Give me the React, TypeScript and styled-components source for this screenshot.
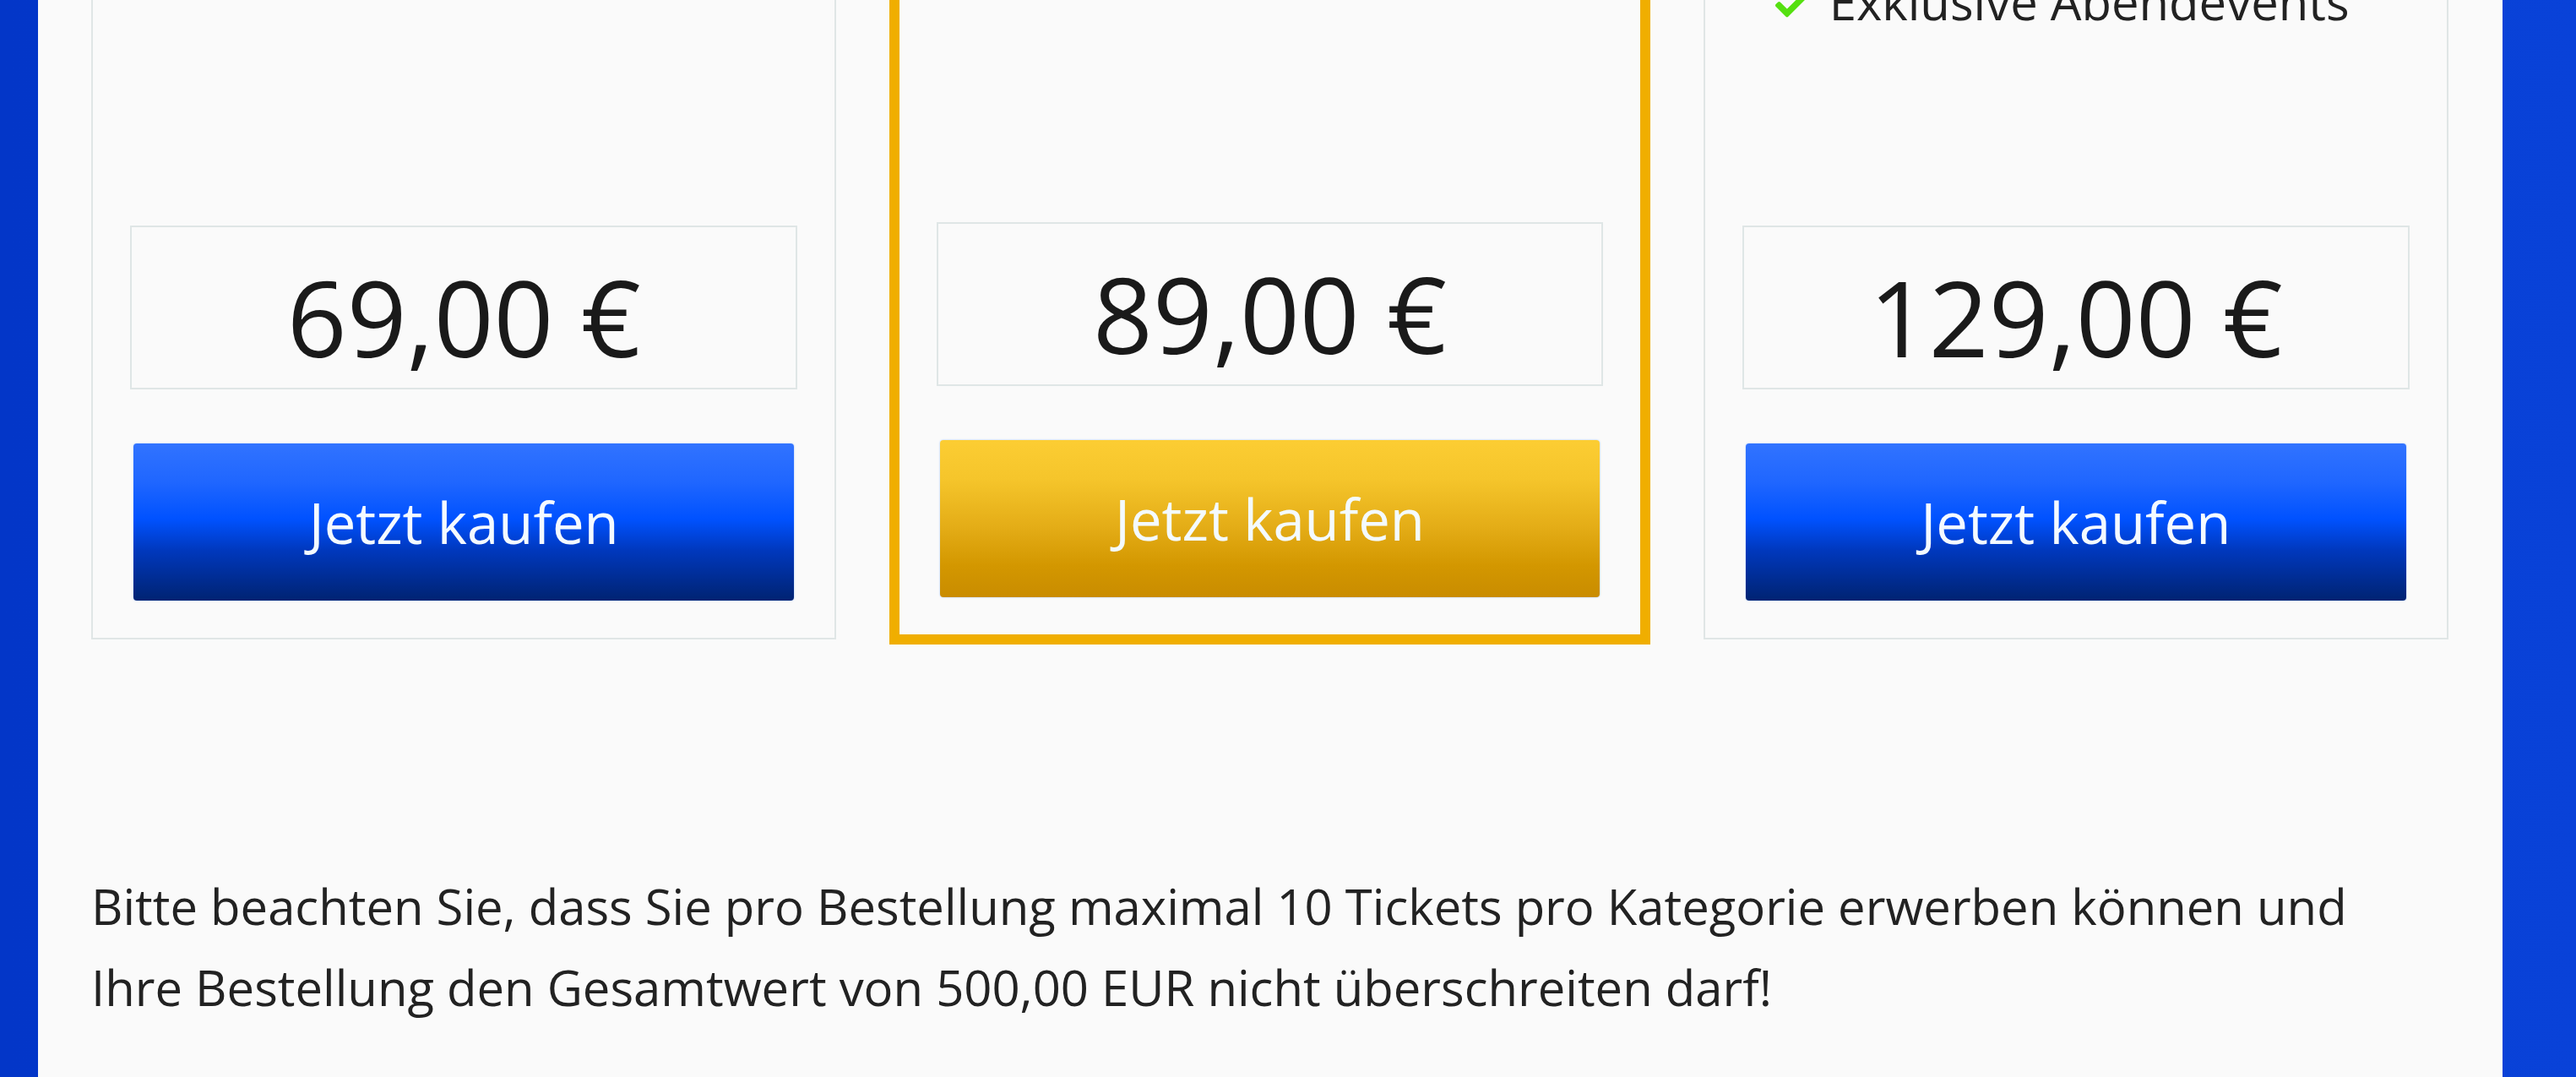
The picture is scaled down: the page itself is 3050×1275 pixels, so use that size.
import React from "react";
import styled, { createGlobalStyle, css } from "styled-components";
import { FaCheck } from "react-icons/fa";

interface Ticket {
  id: string;
  price: string;
  featured?: boolean;
  features?: string[];
}

const tickets: Ticket[] = [
  { id: "basic", price: "69,00 €" },
  { id: "plus", price: "89,00 €", featured: true },
  { id: "vip", price: "129,00 €", features: ["Exklusive Abendevents"] }
];

const GlobalStyle = createGlobalStyle`
  html, body {
    margin: 0;
    padding: 0;
  }
  body {
    background: #0437cc;
    font-family: "Open Sans", "Noto Sans", sans-serif;
    color: #222;
  }
`;

const App: React.FC = () => {
  return (
    <>
      <GlobalStyle />
      <Shell>
        <Main>
          <TicketGrid>
            {tickets.map((t) => (
              <Card key={t.id} featured={t.featured}>
                {t.features && (
                  <FeatureList>
                    {t.features.map((f) => (
                      <FeatureItem key={f}>
                        <CheckIcon />
                        <span>{f}</span>
                      </FeatureItem>
                    ))}
                  </FeatureList>
                )}
                <PriceBox>{t.price}</PriceBox>
                <BuyButton featured={t.featured}>Jetzt kaufen</BuyButton>
              </Card>
            ))}
          </TicketGrid>
          <Notice>
            Bitte beachten Sie, dass Sie pro Bestellung maximal 10 Tickets pro Kategorie erwerben können und
            Ihre Bestellung den Gesamtwert von 500,00 EUR nicht überschreiten darf!
          </Notice>
        </Main>
      </Shell>
    </>
  );
};

const Shell = styled.div`
  display: flex;
  height: 100vh;
  overflow: hidden;
  padding-left: 45px;
  background: linear-gradient(90deg, #0336c8 0%, #0439cf 50%, #0942d8 100%);
`;

const Main = styled.main`
  width: 2918px;
  flex-shrink: 0;
  background: #fafafa;
  padding: 0 64px 0 63px;
  box-sizing: border-box;
`;

const TicketGrid = styled.div`
  display: grid;
  grid-template-columns: repeat(3, 1fr);
  column-gap: 72px;
  margin-top: -40px;
`;

const Card = styled.div<{ featured?: boolean }>`
  display: flex;
  flex-direction: column;
  min-height: 797px;
  box-sizing: border-box;
  background: #fafafa;
  border: 2px solid #e0e6e6;
  padding: 0 44px 44px;

  ${({ featured }) =>
    featured &&
    css`
      border: 12px solid #f0ae00;
      margin: -10px -9px -6px;
    `}
`;

const FeatureList = styled.ul`
  list-style: none;
  margin: 0;
  padding: 0 0 0 39px;
`;

const FeatureItem = styled.li`
  display: flex;
  align-items: baseline;
  gap: 27px;
  font-size: 58px;
  line-height: 80px;
  color: #222;
`;

const CheckIcon = styled(FaCheck)`
  width: 37px;
  height: 37px;
  color: #55e010;
  flex-shrink: 0;
  position: relative;
  top: 1px;
`;

const PriceBox = styled.div`
  margin-top: auto;
  border: 2px solid #dfe6e6;
  padding: 34px 0 12px;
  font-size: 124px;
  line-height: 144px;
  text-align: center;
  color: #1a1a1a;
`;

const blueGradient = css`
  background: linear-gradient(
    to bottom,
    #3173ff 0%,
    #1f66ff 25%,
    #0052ff 48%,
    #0038bd 68%,
    #002372 100%
  );
`;

const goldGradient = css`
  background: linear-gradient(
    to bottom,
    #fccd33 0%,
    #f5c52b 25%,
    #e4ad17 55%,
    #d39700 80%,
    #c98c00 100%
  );
`;

const BuyButton = styled.button<{ featured?: boolean }>`
  margin: 64px 4px 0;
  height: 186px;
  border: none;
  border-radius: 4px;
  box-shadow: 0 0 2px rgba(80, 150, 255, 0.6);
  ${({ featured }) => (featured ? goldGradient : blueGradient)}
  color: #f4faff;
  font-family: "Open Sans", "Noto Sans", sans-serif;
  font-size: 67px;
  display: flex;
  align-items: center;
  justify-content: center;
  cursor: pointer;
`;

const Notice = styled.p`
  margin: 268px 0 0;
  font-size: 58px;
  line-height: 96px;
  color: #222;
`;

export default App;
